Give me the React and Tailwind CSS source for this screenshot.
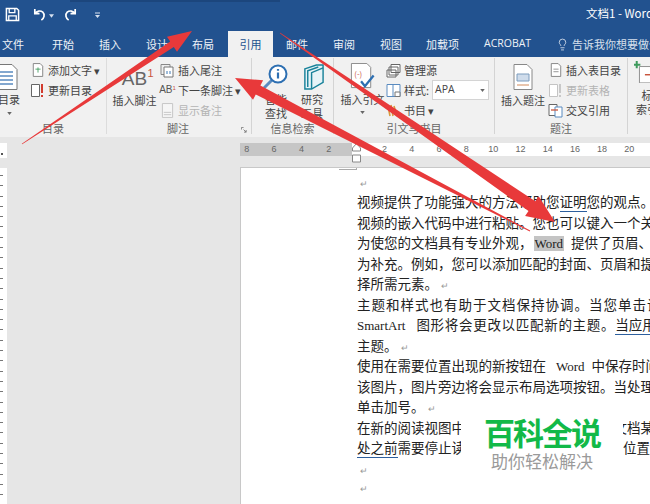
import React from 'react';
import { Lightbulb } from 'lucide-react';

const cjk = { fontFamily: '"Noto Sans CJK SC", sans-serif' };

// tapered annotation arrow: thin tail, thick head
const arrowPoints = (x1, y1, x2, y2, tail, neck, headLen, headW) => {
    const len = Math.hypot(x2 - x1, y2 - y1);
    const ux = (x2 - x1) / len, uy = (y2 - y1) / len;
    const nx = -uy, ny = ux;
    const bx = x2 - ux * headLen, by = y2 - uy * headLen;
    const p = [
        [x1 + nx * tail, y1 + ny * tail],
        [bx + nx * neck, by + ny * neck],
        [bx + nx * headW, by + ny * headW],
        [x2, y2],
        [bx - nx * headW, by - ny * headW],
        [bx - nx * neck, by - ny * neck],
        [x1 - nx * tail, y1 - ny * tail],
    ];
    return p.map(q => q.map(v => v.toFixed(1)).join(',')).join(' ');
};

const Doc = ({ className = 'w-[14px] h-[16px]', children }) => (
    <svg viewBox="0 0 14 16" className={className}>
        <path d="M1.5.5h8l3 3v12h-11z" fill="#fff" stroke="#777" />
        {children}
    </svg>
);

const SmallItem = ({ icon, label, dim }) => (
    <div className={`flex items-center gap-[3px] h-[20px] text-[11px] whitespace-nowrap ${dim ? 'text-[#b4b4b4]' : 'text-[#444]'}`}>
        <span className="w-[15px] h-[16px] flex items-center justify-center shrink-0">{icon}</span>
        {label}
    </div>
);

const GroupLabel = ({ children }) => (
    <div className="absolute bottom-[-1px] left-0 right-0 text-center text-[11px] text-[#666] leading-[14px]">{children}</div>
);

const Group = ({ width, label, children, className = '' }) => (
    <div className={`relative h-[76px] mt-[1px] shrink-0 border-r border-[#d4d4d4] ${width} ${className}`}>
        {children}
        <GroupLabel>{label}</GroupLabel>
    </div>
);

const tabs = [
    ['文件', 'w-[23px] ml-[2px]'], ['开始', 'w-[23px] ml-[27px]'], ['插入', 'w-[23px] ml-[24px]'],
    ['设计', 'w-[23px] ml-[24px]'], ['布局', 'w-[23px] ml-[23px]'],
];
const tabsAfter = [
    ['邮件', 'w-[23px] ml-[13px]'], ['审阅', 'w-[23px] ml-[24px]'], ['视图', 'w-[23px] ml-[24px]'],
    ['加载项', 'w-[34px] ml-[23px]'], ['ACROBAT', 'w-[52px] ml-[24px]'],
];

const rulerLeft = ['8', '6', '4', '2'];
const rulerRight = ['2', '4', '6', '8', '10', '12', '14', '16', '18', '20'];
const vTicks = Array.from({ length: 34 }, (_, i) => i);

const Mark = () => <span className="text-[#999] text-[9px] ml-[3px]">↵</span>;

const Line = ({ children, className = '' }) => (
    <div className={`h-[20.5px] leading-[20.5px] whitespace-nowrap text-[13.5px] text-[#222] ${className}`}>{children}</div>
);

const Word = ({ children }) => (
    <span className="font-['Liberation_Serif',serif] text-[13px] font-normal ml-[10px] mr-[7px]">{children}</span>
);

const App = () => {
    return (
        <div className="relative w-[650px] h-[504px] overflow-hidden bg-[#e6e6e6]" style={cjk}>
            {/* title bar */}
            <div className="h-[31px] bg-[#22528f] flex items-center text-white relative">
                <div className="absolute left-[70px] top-0 w-[210px] h-[2px] bg-[#1c467d]" />
                <svg viewBox="0 0 16 16" className="w-[15px] h-[15px] ml-[5px] mt-[-2px]">
                    <path d="M1.5 1.5h11l2 2v11h-13z" fill="none" stroke="#fff" strokeWidth="1.6" />
                    <path d="M4.5 2v4h6V2M4 14.5V9.5h8v5" fill="none" stroke="#fff" strokeWidth="1.4" />
                </svg>
                <svg viewBox="0 0 16 16" className="w-[15px] h-[15px] ml-[12px] mt-[-2px]">
                    <path d="M3 2v5h5M3.500 7C5 4 9 3.500 11.500 5.500 14 8 13 12 10 14" fill="none" stroke="#fff" strokeWidth="1.8" />
                </svg>
                <svg viewBox="0 0 6 4" className="w-[5px] h-[4px] ml-[2px]"><path d="M0 0h6L3 4z" fill="#d5e0ef" /></svg>
                <svg viewBox="0 0 16 16" className="w-[15px] h-[15px] ml-[9px] mt-[-2px]">
                    <path d="M13 2v5H8M12.500 7C11 4 7 3.500 4.500 5.500 2 8 3 12 6 14" fill="none" stroke="#fff" strokeWidth="1.8" />
                </svg>
                <svg viewBox="0 0 6 7" className="w-[5px] h-[7px] ml-[17px]"><path d="M0 0h6v1H0zM0 3h6L3 6.500z" fill="#d5e0ef" /></svg>
                <div className="ml-auto mr-[-3px] mt-[-4px] text-[11.5px] whitespace-nowrap w-[67px] overflow-hidden">文档1 - Word</div>
            </div>

            {/* tabs */}
            <div className="h-[26px] bg-[#22528f] flex items-center text-[11px] text-[#eef2f8] whitespace-nowrap">
                {tabs.map(([t, c]) => <div key={t} className={`shrink-0 ${c}`}>{t}</div>)}
                <div className="ml-[13px] w-[45px] shrink-0 h-full bg-[#f1f1f1] text-[#22528f] flex items-center justify-center">引用</div>
                {tabsAfter.map(([t, c]) => <div key={t} className={`shrink-0 ${c} ${t === 'ACROBAT' ? "font-['Open_Sans',sans-serif] text-[10.5px]" : ''}`}>{t}</div>)}
                <Lightbulb size={13} strokeWidth={1.4} className="ml-[20px] shrink-0" />
                <div className="ml-[3px] text-[11px] text-[#d7e0ec]">告诉我你想要做什么</div>
            </div>

            {/* ribbon */}
            <div className="h-[80px] bg-[#f1f1f1] flex text-[#444] overflow-hidden">
                <Group width="w-[107px]" label="目录" className="!border-[#dcdcdc]">
                    <div className="absolute left-[-5px] top-[6px] flex flex-col items-center w-[24px]">
                        <svg viewBox="0 0 22 26" className="w-[22px] h-[26px]">
                            <path d="M1 .5h15l5 5v20H1z" fill="#fff" stroke="#777" />
                            <path d="M4 8h13M4 12h13M4 16h13M4 20h13" stroke="#5a8bc0" strokeWidth="1.4" />
                        </svg>
                        <div className="text-[11px] leading-[14px] ml-[4px] whitespace-nowrap mt-[2px]">目录</div>
                        <svg viewBox="0 0 6 4" className="w-[5px] h-[3px] mt-[6px] ml-[4px]"><path d="M0 0h6L3 4z" fill="#666" /></svg>
                    </div>
                    <div className="absolute left-[30px] top-[2px] flex flex-col">
                        <SmallItem label="添加文字 ▾" icon={<Doc className="w-[12px] h-[14px]"><path d="M4 7h6M7 5v6" stroke="#3e9a5c" /></Doc>} />
                        <SmallItem label="更新目录" icon={
                            <svg viewBox="0 0 15 15" className="w-[15px] h-[15px]">
                                <path d="M1.500 1.500h8v12h-8z" fill="#fff" stroke="#666" />
                                <path d="M12 1v9M12 12v2" stroke="#d23b2e" strokeWidth="2" />
                            </svg>} />
                    </div>
                </Group>

                <Group width="w-[145px]" label="">
                    <div className="absolute left-[5px] top-[6px] w-[45px] flex flex-col items-center">
                        <div className="relative h-[27px] w-[30px] font-['Liberation_Sans',sans-serif] text-[#666] text-[19px] leading-[30px] text-center">
                            AB<span className="absolute right-[-4px] top-[-6px] text-[#c8553d] text-[11px]">1</span>
                        </div>
                        <div className="text-[11px] leading-[14px] whitespace-nowrap mt-[2px]">插入脚注</div>
                    </div>
                    <div className="absolute left-[53px] top-[2px] flex flex-col">
                        <SmallItem label="插入尾注" icon={
                            <svg viewBox="0 0 15 15" className="w-[15px] h-[15px]">
                                <path d="M1 1.500h9v10H1z" fill="#eee" stroke="#888" />
                                <path d="M4 4h9v10H4z" fill="#fff" stroke="#777" />
                                <path d="M7 8v3M10 8v3" stroke="#3c78b5" />
                            </svg>} />
                        <SmallItem label="下一条脚注  ▾" icon={<span className="font-['Liberation_Sans',sans-serif] text-[10px] text-[#555] leading-none">AB<sup className="text-[#c8553d] text-[6px]">1</sup></span>} />
                        <SmallItem dim label="显示备注" icon={
                            <svg viewBox="0 0 14 16" className="w-[13px] h-[15px]">
                                <path d="M1.500.5h11v15h-11z" fill="#f6f6f6" stroke="#c4c4c4" />
                                <path d="M3 10h8M3 12.500h8" stroke="#c4c4c4" />
                            </svg>} />
                    </div>
                    <GroupLabel><span className="block ml-[-2px]">脚注</span></GroupLabel>
                    <svg viewBox="0 0 7 7" className="absolute right-[4px] bottom-[1px] w-[6px] h-[6px]">
                        <path d="M.5 3V.5H3M3 3l3 3M6 3.500V6H3.500" fill="none" stroke="#777" />
                    </svg>
                </Group>

                <Group width="w-[82px]" label="信息检索">
                    <svg viewBox="0 0 28 28" className="absolute left-[9px] top-[5px] w-[28px] h-[28px]">
                        <path d="M3 25l8-8" stroke="#5a8bc0" strokeWidth="3" />
                        <circle cx="17" cy="11" r="8.500" fill="#fff" stroke="#2d6fb2" strokeWidth="2" />
                        <path d="M17 6v1.800M17 9.500v6" stroke="#2d6fb2" strokeWidth="2.200" />
                    </svg>
                    <svg viewBox="0 0 24 28" className="absolute left-[50px] top-[6px] w-[23px] h-[27px]">
                        <path d="M3 5l12-4h7v18l-12 7H3z" fill="#e6f3f7" stroke="#19829a" strokeWidth="1.500" />
                        <path d="M10 26V9l12-5M6 24V7l11-4" fill="none" stroke="#19829a" strokeWidth="1.500" />
                    </svg>
                    <div className="absolute left-[12px] top-[34px] w-[24px] text-[11px] leading-[14px] text-center">智能查找</div>
                    <div className="absolute left-[48px] top-[34px] w-[24px] text-[11px] leading-[14px] text-center">研究工具</div>
                </Group>

                <Group width="w-[161px]" label="引文与书目">
                    <div className="absolute left-[0px] top-[5px] w-[57px] flex flex-col items-center">
                        <svg viewBox="0 0 26 28" className="w-[26px] h-[27px]">
                            <path d="M1 .5h16l4 4v21H1z" fill="#fff" stroke="#888" />
                            <text x="4" y="14" fontSize="8" fill="#c8553d">(-)</text>
                            <path d="M11 19l4 5 9-11" fill="none" stroke="#2d6fb2" strokeWidth="2.400" />
                        </svg>
                        <div className="text-[11px] leading-[14px] whitespace-nowrap mt-[2px]">插入引文</div>
                        <svg viewBox="0 0 6 4" className="w-[5px] h-[3px] mt-[5px]"><path d="M0 0h6L3 4z" fill="#666" /></svg>
                    </div>
                    <div className="absolute left-[52px] top-[2px] flex flex-col">
                        <SmallItem label="管理源" icon={
                            <svg viewBox="0 0 15 15" className="w-[15px] h-[15px]">
                                <path d="M5 1.500h9v8H5zM3 4h9v8H3zM1 7h9v7H1z" fill="#fff" stroke="#666" />
                            </svg>} />
                        <div className="flex items-center h-[20px]">
                            <SmallItem label="样式:" icon={
                                <svg viewBox="0 0 15 15" className="w-[15px] h-[15px]">
                                    <path d="M1 1.500h13v12H1zM7 1.500v12" fill="#fff" stroke="#5a8bc0" />
                                    <path d="M9 9h5v4.500H9z" fill="#fff" stroke="#777" />
                                </svg>} />
                            <div className="ml-[3px] w-[57px] h-[20px] bg-white border border-[#d4d4d4] flex items-center pl-[2px] text-[10.5px] font-['Open_Sans',sans-serif] text-[#444]">
                                APA
                                <svg viewBox="0 0 6 4" className="w-[5px] h-[3px] ml-auto mr-[3px]"><path d="M0 0h6L3 4z" fill="#666" /></svg>
                            </div>
                        </div>
                        <SmallItem label="书目 ▾" icon={
                            <svg viewBox="0 0 15 15" className="w-[15px] h-[15px]">
                                <path d="M2 3l2 10M5 2l2 11M8 3l3 10" stroke="#d99a3d" strokeWidth="1.600" />
                            </svg>} />
                    </div>
                </Group>

                <Group width="w-[133px]" label="题注">
                    <div className="absolute left-[5px] top-[6px] w-[46px] flex flex-col items-center">
                        <svg viewBox="0 0 20 26" className="w-[20px] h-[26px]">
                            <path d="M1 .5h13l5 5v20H1z" fill="#fff" stroke="#888" />
                            <path d="M4 10h12v7H4z" fill="#cfdceb" stroke="#7d9cbd" />
                            <path d="M4 21h12" stroke="#d28a5a" />
                        </svg>
                        <div className="text-[11px] leading-[14px] whitespace-nowrap mt-[3px]">插入题注</div>
                    </div>
                    <div className="absolute left-[53px] top-[2px] flex flex-col">
                        <SmallItem label="插入表目录" icon={<Doc className="w-[12px] h-[14px]"><path d="M4 7h6M4 10h6" stroke="#888" /></Doc>} />
                        <SmallItem dim label="更新表格" icon={
                            <svg viewBox="0 0 15 15" className="w-[15px] h-[15px]">
                                <path d="M1.500 1.500h8v12h-8z" fill="#fff" stroke="#c4c4c4" />
                                <path d="M12 1v9M12 12v2" stroke="#c8c8c8" strokeWidth="2" />
                            </svg>} />
                        <SmallItem label="交叉引用" icon={
                            <svg viewBox="0 0 15 15" className="w-[15px] h-[15px]">
                                <path d="M1 1.500h8v11H1z" fill="#fff" stroke="#666" />
                                <path d="M7 4h7v10H7z" fill="#fff" stroke="#5a8bc0" />
                                <path d="M3 7h7" stroke="#c8553d" strokeWidth="1.300" />
                            </svg>} />
                    </div>
                </Group>

                <div className="relative flex-1">
                    <svg viewBox="0 0 22 24" className="absolute left-[6px] top-[4px] w-[20px] h-[22px]">
                        <path d="M6 6h15v18H6z" fill="#fff" stroke="#888" />
                        <path d="M3 0v8M0 4h7" stroke="#3e9a5c" strokeWidth="2.200" />
                        <path d="M12 15h7" stroke="#c8553d" strokeWidth="1.600" />
                    </svg>
                    <div className="absolute left-[4px] top-[31px] w-[30px] text-[11px] leading-[14px] text-center">
                        <div>标</div><div className="whitespace-nowrap">索引</div>
                    </div>
                </div>
            </div>

            {/* ruler row */}
            <div className="h-[31px] bg-[#e6e6e6] flex items-start pt-[6px]">
                <div className="w-[7px] h-[15px] bg-white shrink-0 flex items-center"><div className="w-[2px] h-[2px] bg-[#555] ml-[1px] mt-[6px]" /></div>
                <div className="ml-[233px] h-[13px] w-[112px] bg-[#c6c6c6] flex items-center text-[9px] text-[#666] font-['Liberation_Sans',sans-serif] shrink-0">
                    {rulerLeft.map(n => <div key={n} className="w-[27.4px] text-center ml-[0px] -translate-x-[7px]">{n}</div>)}
                </div>
                <div className="relative h-[13px] flex-1 bg-white flex items-center text-[9px] text-[#666] font-['Liberation_Sans',sans-serif] pl-[19px]">
                    {rulerRight.map(n => <div key={n} className="w-[27.2px] text-center shrink-0">{n}</div>)}
                    <svg viewBox="0 0 9 21" className="absolute left-[0px] top-[0px] w-[9px] h-[21px] overflow-visible">
                        <path d="M.5 5l4-4.500 4 4.500v3h-8zM.5 12h8v7h-8z" fill="#fff" stroke="#888" />
                    </svg>
                </div>
            </div>

            {/* document */}
            <div className="flex h-[336px]">
                <div className="w-[7px] bg-white shrink-0 flex flex-col gap-[9.300px] pt-[7px] overflow-hidden">
                    {vTicks.map(i => <div key={i} className="w-[3px] h-[1px] bg-[#777] shrink-0" />)}
                </div>
                <div className="w-[233px] shrink-0" />
                <div className="relative flex-1 bg-white border-l border-t border-[#c8c8c8] mt-[-1px] pl-[116px] pt-[3px] overflow-hidden">
                    <div className="absolute left-[98px] top-0 w-[18px] h-[2px] border-r border-b border-[#aaa]" />
                    <div className="h-[16px] leading-[16px] mt-[1px]"><Mark /></div>
                    <div className="pt-[3px]">
                        <Line>视频提供了功能强大的方法帮助您<span className="border-b border-[#2d5f9e]">证明</span>您的观点。当您</Line>
                        <Line>视频的嵌入代码中进行粘贴。您也可以键入一个关键字</Line>
                        <Line>为使您的文档具有专业外观，<span className="bg-[#c4c4c4] font-['Liberation_Serif',serif] text-[13px] px-[1px] ml-[1px] mr-[7px]">Word</span>提供了页眉、页脚</Line>
                        <Line>为补充。例如，您可以添加匹配的封面、页眉和提要栏</Line>
                        <Line>择所需元素。<Mark /></Line>
                        <Line className="tracking-[1px]">主题和样式也有助于文档保持协调。当您单击设计</Line>
                        <Line><span className="font-['Liberation_Serif',serif] text-[13px] mr-[11px]">SmartArt</span><span className="tracking-[0.7px]">图形将会更改以匹配新的主题。</span><span className="border-b border-[#2d5f9e]">当应用</span>样式</Line>
                        <Line>主题。<Mark /></Line>
                        <Line>使用在需要位置出现的新按钮在<Word>Word</Word>中保存时间。若要</Line>
                        <Line>该图片，图片旁边将会显示布局选项按钮。当处理表格</Line>
                        <Line>单击加号。<Mark /></Line>
                        <Line>在新的阅读视图中阅读更加容易。可以折叠文档某些部分</Line>
                        <Line><span className="border-b border-[#2d5f9e]">处之前</span>需要停止读取，Word 会记住您的停止位置</Line>
                    </div>
                    <div className="h-[18px] leading-[18px]"><Mark /></div>
                    <div className="h-[18px] leading-[18px]"><Mark /></div>
                </div>
            </div>

            {/* watermark */}
            <div className="absolute left-[461px] top-[410px] w-[162px] h-[94px] bg-white flex flex-col items-center pt-[4px]">
                <div className="text-[31px] leading-[36px] font-bold text-[#12b948] tracking-[-2px] whitespace-nowrap">百科全说</div>
                <div className="text-[17px] leading-[22px] text-[#9a9a9a] whitespace-nowrap">助你轻松解决</div>
            </div>

            {/* red annotation arrows */}
            <svg viewBox="0 0 650 504" className="absolute inset-0 w-[650px] h-[504px] pointer-events-none">
                <polygon points={arrowPoints(22, 144, 192, 31, 0.4, 3.2, 24, 9)} fill="#e8393a" />
                <polygon points={arrowPoints(530, 231, 235, 78, 0.5, 5, 26, 11)} fill="#e8393a" />
                <polygon points={arrowPoints(280, 33, 555, 222, 0.4, 6, 28, 12)} fill="#e8393a" />
            </svg>
        </div>
    );
};

export default App;
